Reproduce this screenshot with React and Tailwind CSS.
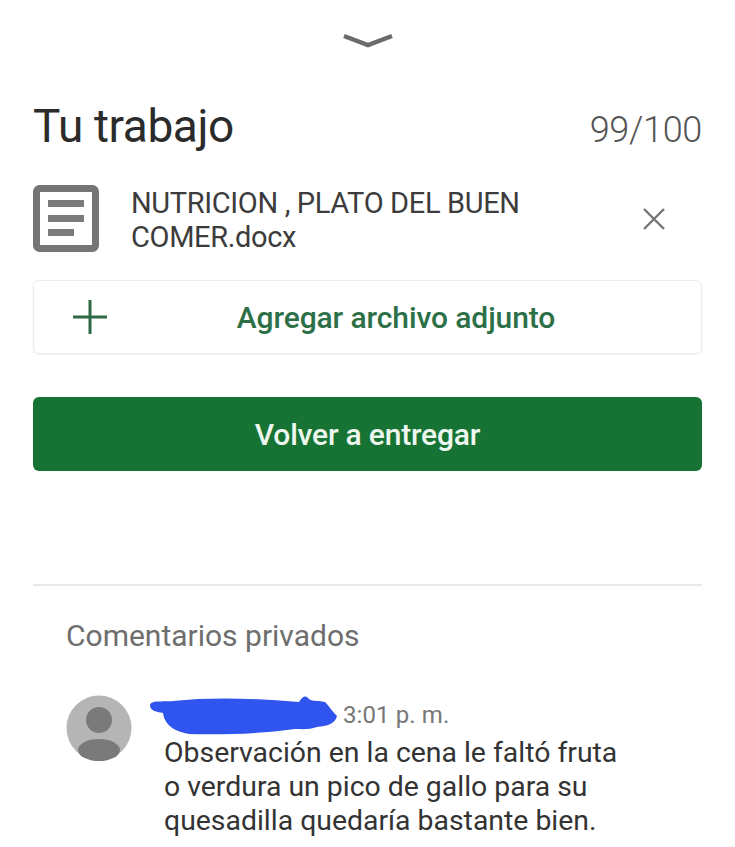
import React from 'react';

const font = { fontFamily: 'Roboto, sans-serif' };

function DocIcon() {
    return (
        <svg width="66" height="67" viewBox="0 0 66 67" className="shrink-0">
            <rect x="3.5" y="3.5" width="59" height="60" rx="3" fill="none" stroke="#757575" strokeWidth="7" />
            <rect x="15" y="15" width="36" height="7" fill="#7b7b7b" />
            <rect x="15" y="30" width="36" height="7" fill="#7b7b7b" />
            <rect x="15" y="44" width="26" height="7" fill="#7b7b7b" />
        </svg>
    );
}

function Avatar() {
    return (
        <svg width="66" height="66" viewBox="0 0 66 66" className="shrink-0">
            <circle cx="33" cy="33" r="32.5" fill="#b5b5b5" />
            <circle cx="33" cy="25" r="13" fill="#7a7a7a" />
            <ellipse cx="33" cy="55" rx="21" ry="11" fill="#7a7a7a" />
        </svg>
    );
}

function Scribble() {
    return (
        <svg width="190" height="42" viewBox="0 0 190 42" className="shrink-0">
            <path
                d="M1 11 C2 6 14 8 24 7 C60 3 105 4 150 8 C153 3 156 1 159 4 C162 8 168 6 176 8 C180 12 182 16 188 22 C186 30 178 32 168 33 C160 36 152 35 146 35 C110 40 70 41 40 40 C30 38 16 34 14 19 C8 18 1 17 1 11 Z"
                fill="#2f55ee"
            />
        </svg>
    );
}

export default function App() {
    return (
        <div className="w-[735px] h-[847px] bg-white overflow-hidden" style={font}>
            <div className="flex justify-center pt-[33px]">
                <svg width="52" height="16" viewBox="0 0 52 16">
                    <path d="M2 3 L26 12 L50 3" fill="none" stroke="#6b6b6b" strokeWidth="4.5" />
                </svg>
            </div>

            <div className="px-[33px]">
                <div className="flex items-center justify-between mt-[49px] h-[56px]">
                    <h2 className="text-[46px] leading-[56px] text-[#2b2b2b] tracking-[-0.4px]">Tu trabajo</h2>
                    <span className="text-[36px] font-light text-[#555555] mt-2 tracking-[-0.3px]">99/100</span>
                </div>

                <div className="flex items-start mt-[31px]">
                    <DocIcon />
                    <div className="ml-[32px] mt-[1px] w-[440px] text-[29px] leading-[34px] text-[#3c3c3c] tracking-[-0.35px]">
                        NUTRICION , PLATO DEL BUEN COMER.docx
                    </div>
                    <svg width="24" height="24" viewBox="0 0 24 24" className="ml-auto mr-[36px] self-center -mt-[1px]">
                        <path d="M2 2 L22 22 M22 2 L2 22" stroke="#757575" strokeWidth="2.4" />
                    </svg>
                </div>

                <div className="relative flex items-center justify-center mt-[26px] h-[74px] rounded-md border border-[#ececec] shadow-[0_1px_2px_rgba(0,0,0,0.06)]">
                    <svg width="36" height="36" viewBox="0 0 36 36" className="absolute left-[38px] top-[18px]">
                        <path d="M18 1 V35 M1 18 H35" stroke="#2d6a45" strokeWidth="3" />
                    </svg>
                    <span className="text-[30px] font-medium tracking-[-0.1px] text-[#2d7048] ml-[57px]">Agregar archivo adjunto</span>
                </div>

                <button className="w-full h-[74px] mt-[43px] rounded-md bg-[#177333] text-[30px] font-medium tracking-[-0.2px] text-[#eef7ef]">
                    Volver a entregar
                </button>

                <div className="mt-[113px] border-t-2 border-[#e8e8e8]" />

                <div className="pl-[33px] pt-[33px]">
                    <div className="text-[30px] leading-[34px] text-[#6e6e6e]">Comentarios privados</div>

                    <div className="flex mt-[42px]">
                        <Avatar />
                        <div className="ml-[32px] mt-[1px]">
                            <div className="flex items-center h-[38px] -ml-[15px]">
                                <Scribble />
                                <span className="text-[24px] text-[#777777] ml-[4px] tracking-[0.1px]">3:01 p. m.</span>
                            </div>
                            <p className="w-[480px] mt-[2px] text-[28.4px] leading-[34px] text-[#333333]">
                                Observación en la cena le faltó fruta
                                <br />o verdura un pico de gallo para su
                                <br />quesadilla quedaría bastante bien.
                            </p>
                        </div>
                    </div>
                </div>
            </div>
        </div>
    );
}
